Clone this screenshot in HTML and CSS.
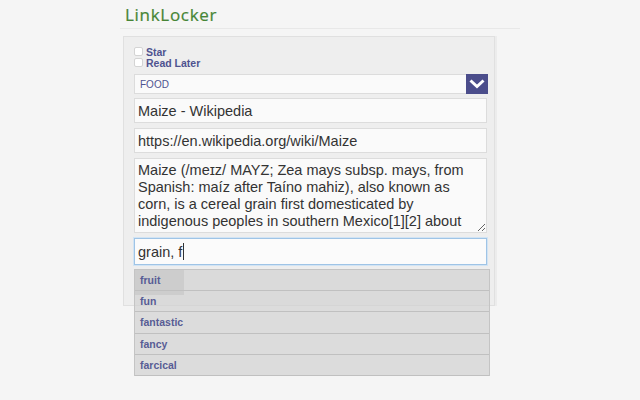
FILE: index.html
```html
<!DOCTYPE html>
<html>
<head>
<meta charset="utf-8">
<link rel="stylesheet" href="styles.css">
</head>
<body>
<div class="app">
  <header class="header"><h1 class="logo">LinkLocker</h1></header>
  <div class="editor">
    <div class="panel">
      <label class="check"><span class="box"></span>Star</label>
      <label class="check"><span class="box"></span>Read Later</label>
      <div class="select">
        <span class="select-value">FOOD</span>
        <span class="select-btn">
          <svg width="16" height="10" viewBox="0 0 16 10"><path d="M1.5 1.5 L8 7.5 L14.5 1.5" fill="none" stroke="#fff" stroke-width="3"/></svg>
        </span>
      </div>
      <input class="field" type="text" value="Maize - Wikipedia">
      <input class="field" type="text" value="https://en.wikipedia.org/wiki/Maize">
      <textarea class="field area">Maize (/meɪz/ MAYZ; Zea mays subsp. mays, from Spanish: maíz after Taíno mahiz), also known as corn, is a cereal grain first domesticated by indigenous peoples in southern Mexico[1][2] about 10,000 years ago. The leafy stalk of the plant produces pollen inflorescences and separate ovuliferous inflorescences called ears that yield kernels or seeds, which are fruits.</textarea>
      <div class="field tags">grain, f<span class="caret"></span></div>
      <div class="save"></div>
    </div>
    <ul class="suggest">
      <li class="item">fruit</li>
      <li class="item">fun</li>
      <li class="item">fantastic</li>
      <li class="item">fancy</li>
      <li class="item">farcical</li>
    </ul>
  </div>
</div>
</body>
</html>
```
FILE: styles.css
```css
html, body {
  margin: 0;
  background: #f5f5f5;
  font-family: "Liberation Sans", Arial, sans-serif;
}
body {
  min-height: 400px;
}
.app {
  width: 400px;
  margin-left: 120px;
}
.header {
  padding: 5px 0 3px 5px;
  border-bottom: 1px solid #e8e8e8;
}
.logo {
  margin: 0;
  font-family: "Open Sans", sans-serif;
  font-weight: 400;
  font-size: 17px;
  line-height: 20px;
  letter-spacing: 0.7px;
  color: #468536;
  -webkit-text-stroke: 0.2px #468536;
}
.editor {
  position: relative;
}
.panel {
  box-sizing: border-box;
  width: 372px;
  margin: 7px 0 0 3px;
  padding: 9px 7px 10px 10px;
  background: #eeeeee;
  border: 1px solid #e0e0e0;
  box-shadow: 2px 0 0 #ececec;
  display: flex;
  flex-direction: column;
}
.check {
  display: flex;
  align-items: center;
  gap: 3px;
  height: 11px;
  font-size: 10.5px;
  font-weight: bold;
  color: #4f5390;
}
.box {
  box-sizing: border-box;
  width: 9px;
  height: 9px;
  background: #fff;
  border: 1px solid #d4d4d4;
  border-radius: 2px;
}
.select {
  margin-top: 6px;
  height: 20px;
  box-sizing: border-box;
  display: flex;
  align-items: center;
  justify-content: space-between;
  background: #fafafa;
  border: 1px solid #dcdcdc;
  border-right: none;
}
.select-value {
  padding-left: 5px;
  font-size: 10px;
  color: #4f5390;
}
.select-btn {
  width: 22px;
  height: 20px;
  margin-right: -1px;
  background: #4b4d8b;
  display: flex;
  align-items: center;
  justify-content: center;
}
.field {
  box-sizing: border-box;
  width: 100%;
  margin: 4px 0 0;
  height: 25px;
  padding: 0 3px;
  background: #fafafa;
  border: 1px solid #dcdcdc;
  border-radius: 0;
  font-family: "Liberation Sans", Arial, sans-serif;
  font-size: 14.5px;
  color: #333;
  outline: none;
}
.field + .field { margin-top: 5px; }
.area {
  height: 75px;
  padding: 3px 3px 2px;
  line-height: 16.9px;
  overflow: hidden;
  resize: vertical;
  display: block;
}
.tags {
  height: 27px;
  display: flex;
  align-items: center;
  border: 1px solid #9fc4e6;
  box-shadow: 0 0 0 1px #d2e4f4;
  background: #fbfbfb;
}
.caret {
  width: 1px;
  height: 17px;
  margin-left: 1px;
  background: #333;
}
.save {
  margin-top: 5px;
  width: 50px;
  height: 25px;
  background: #c6c6c6;
}
.suggest {
  position: absolute;
  left: 14px;
  top: 233px;
  width: 354px;
  margin: 0;
  padding: 0;
  list-style: none;
  border: 1px solid #c4c4c4;
  border-bottom: none;
}
.item {
  height: 20.2px;
  line-height: 20px;
  padding-left: 5px;
  border-bottom: 1px solid #c0c0c0;
  background: rgba(208, 208, 208, 0.68);
  font-size: 10.5px;
  font-weight: bold;
  color: #585c95;
}
```
